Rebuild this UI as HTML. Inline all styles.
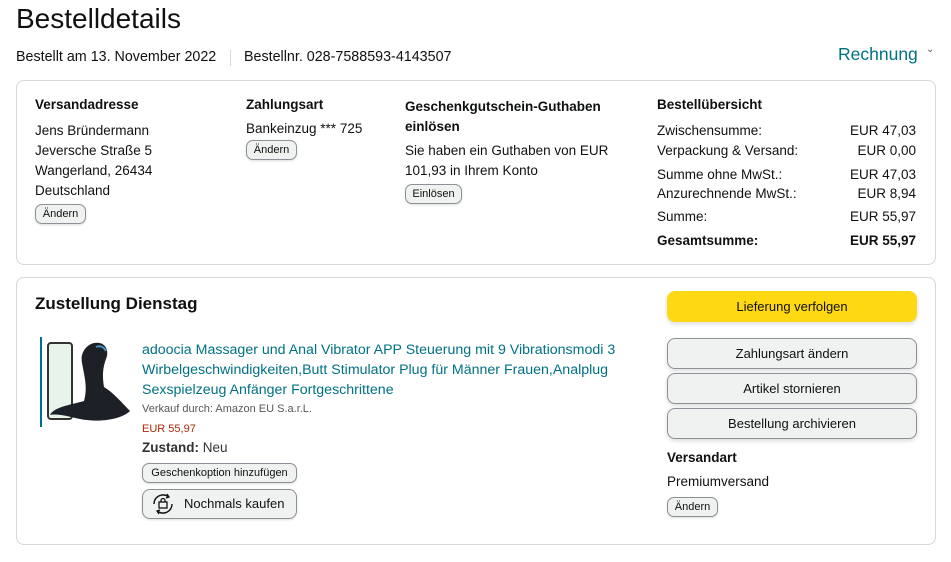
<!DOCTYPE html>
<html><head><meta charset="utf-8"><style>
*{margin:0;padding:0;box-sizing:border-box}
body{width:951px;height:562px;background:#fff;font-family:"Liberation Sans",sans-serif;color:#0f1111;position:relative;overflow:hidden;font-size:13.5px}
.a{position:absolute;white-space:nowrap}
.b{font-weight:bold}
.box{position:absolute;border:1px solid #d5d9d9;border-radius:8px}
.sb{position:absolute;border:1px solid #8d9096;border-radius:7px;background:#f0f2f2;font-size:11px;text-align:center;line-height:18px;height:20px;box-shadow:0 1px 2px rgba(15,17,17,.15)}
.btn{position:absolute;left:667px;width:250px;height:31px;border:1px solid #8d9096;border-radius:8px;background:#f0f2f2;text-align:center;line-height:29px;font-size:13px;box-shadow:0 2px 4px rgba(15,17,17,.15)}
.r{text-align:right}
</style></head><body>
<div class="a" style="left:16px;top:3px;font-size:28px">Bestelldetails</div>
<div class="a" style="left:16px;top:49px;font-size:14.3px">Bestellt am 13. November 2022</div>
<div class="a" style="left:230px;top:50px;width:1px;height:16px;background:#d5d9d9"></div>
<div class="a" style="left:244px;top:49px;font-size:14.3px">Bestellnr. 028-7588593-4143507</div>
<div class="a" style="left:838px;top:44px;font-size:17.5px;color:#007185">Rechnung</div>
<div class="a" style="left:926px;top:44px;font-size:10px;color:#565959">&#8964;</div>

<div class="box" style="left:16px;top:80px;width:920px;height:185px"></div>
<div class="a b" style="left:35px;top:97px">Versandadresse</div>
<div class="a" style="left:35px;top:121px;line-height:20px">Jens Bründermann<br>Jeversche Straße 5<br>Wangerland, 26434<br>Deutschland</div>
<div class="sb" style="left:35px;top:204px;width:51px">Ändern</div>

<div class="a b" style="left:246px;top:97px">Zahlungsart</div>
<div class="a" style="left:246px;top:121px">Bankeinzug *** 725</div>
<div class="sb" style="left:246px;top:140px;width:51px">Ändern</div>

<div class="a b" style="left:405px;top:97px;line-height:20px">Geschenkgutschein-Guthaben<br>einlösen</div>
<div class="a" style="left:405px;top:141px;line-height:20px">Sie haben ein Guthaben von EUR<br>101,93 in Ihrem Konto</div>
<div class="sb" style="left:405px;top:184px;width:57px">Einlösen</div>

<div class="a b" style="left:657px;top:97px">Bestellübersicht</div>
<div class="a" style="left:657px;top:121px;line-height:20px">Zwischensumme:<br>Verpackung &amp; Versand:</div>
<div class="a r" style="left:800px;width:116px;top:121px;line-height:20px">EUR 47,03<br>EUR 0,00</div>
<div class="a" style="left:657px;top:165px;line-height:19px">Summe ohne MwSt.:<br>Anzurechnende MwSt.:</div>
<div class="a r" style="left:800px;width:116px;top:165px;line-height:19px">EUR 47,03<br>EUR 8,94</div>
<div class="a" style="left:657px;top:209px">Summe:</div>
<div class="a r" style="left:800px;width:116px;top:209px">EUR 55,97</div>
<div class="a b" style="left:657px;top:233px">Gesamtsumme:</div>
<div class="a b r" style="left:800px;width:116px;top:233px">EUR 55,97</div>

<div class="box" style="left:16px;top:277px;width:920px;height:268px"></div>
<div class="a b" style="left:35px;top:294px;font-size:17px">Zustellung Dienstag</div>
<div class="a" style="left:40px;top:337px;width:2px;height:90px;background:#007185"></div>
<svg class="a" style="left:44px;top:337px" width="88" height="90" viewBox="0 0 88 90">
<rect x="4" y="6" width="24" height="76" rx="3" fill="#e8f4ea" stroke="#333" stroke-width="2"/>
<path d="M50 6c10-2 16 6 12 16-3 8-4 16-2 28 10 6 20 18 26 24-8 8-30 12-50 8-10-2-22-6-30-4 4-8 20-10 34-14 4-14 0-26-2-38-2-10 4-18 12-20z" fill="#1d2127"/>
<path d="M52 10c4-2 8 0 10 4" stroke="#4a90c8" stroke-width="2" fill="none"/>
</svg>
<div class="a" style="left:142px;top:340px;font-size:14.2px;color:#007185;line-height:20px">adoocia Massager und Anal Vibrator APP Steuerung mit 9 Vibrationsmodi 3<br>Wirbelgeschwindigkeiten,Butt Stimulator Plug für Männer Frauen,Analplug<br>Sexspielzeug Anfänger Fortgeschrittene</div>
<div class="a" style="left:142px;top:403px;font-size:11px;color:#565959">Verkauf durch: Amazon EU S.a.r.L.</div>
<div class="a" style="left:142px;top:423px;font-size:11px;color:#b12704">EUR 55,97</div>
<div class="a" style="left:142px;top:440px;font-size:13.5px;color:#333"><b>Zustand:</b> Neu</div>
<div class="sb" style="left:142px;top:463px;width:155px">Geschenkoption hinzufügen</div>
<div class="sb" style="left:142px;top:489px;width:155px;height:30px;line-height:28px;font-size:13px;border-radius:8px;text-align:left;padding-left:41px">Nochmals kaufen</div>
<svg class="a" style="left:150px;top:493px" width="26" height="22" viewBox="0 0 26 22">
<path d="M4 11a9 9 0 0 1 14-7.5M22 11a9 9 0 0 1-14 7.5" stroke="#0f1111" stroke-width="1.4" fill="none"/>
<path d="M17 1l2 3-3 1M9 21l-2-3 3-1" stroke="#0f1111" stroke-width="1.3" fill="none"/>
<rect x="9" y="9" width="8" height="6" stroke="#0f1111" stroke-width="1.3" fill="none"/>
<path d="M11 9V7.5a2 2 0 0 1 4 0V9" stroke="#0f1111" stroke-width="1.3" fill="none"/>
</svg>

<div class="btn" style="top:291px;background:#ffd814;border-color:#ffd814;border-radius:8px">Lieferung verfolgen</div>
<div class="btn" style="top:338px">Zahlungsart ändern</div>
<div class="btn" style="top:373px">Artikel stornieren</div>
<div class="btn" style="top:408px">Bestellung archivieren</div>
<div class="a b" style="left:667px;top:450px">Versandart</div>
<div class="a" style="left:667px;top:474px">Premiumversand</div>
<div class="sb" style="left:667px;top:497px;width:51px">Ändern</div>
</body></html>
